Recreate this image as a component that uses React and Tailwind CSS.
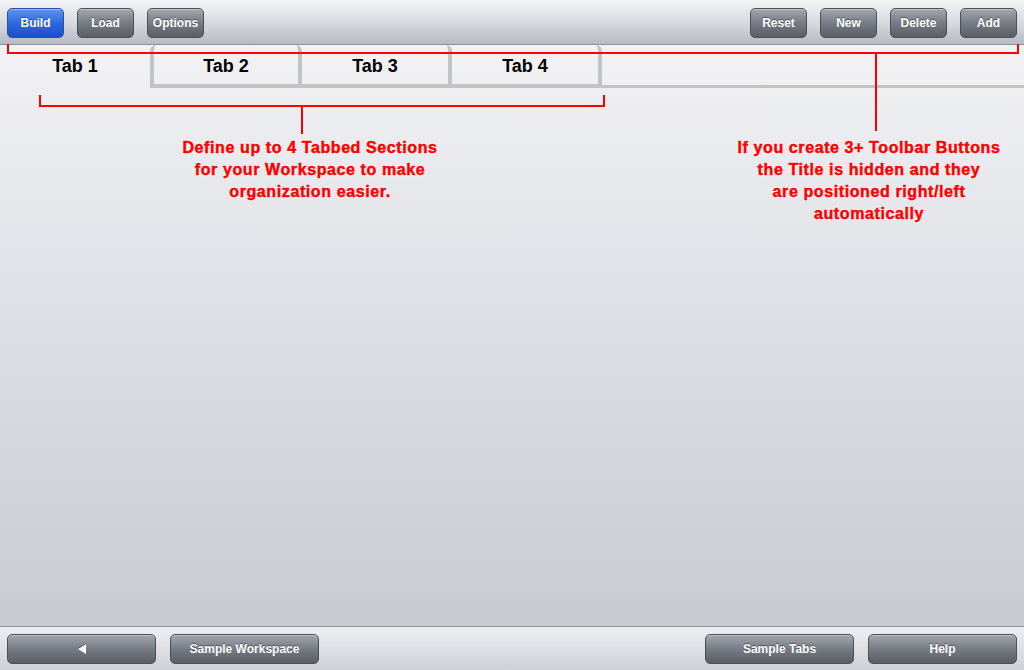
const FONT = { fontFamily: '"Liberation Sans", Arial, sans-serif' };

function ToolButton({ label, primary }) {
  return (
    <button
      type="button"
      className={
        primary
          ? 'h-[30px] w-[57px] rounded-[5px] border border-[#2a4fa8] bg-gradient-to-b from-[#5e93f0] via-[#2f68e0] to-[#1d4fc9] text-[12px] font-bold text-white shadow-[inset_0_1px_0_rgba(255,255,255,0.35)] [text-shadow:0_-1px_0_rgba(0,0,0,0.35)]'
          : 'h-[30px] w-[57px] rounded-[5px] border border-[#4b5058] bg-gradient-to-b from-[#a3a7ae] via-[#777b83] to-[#5a5e66] text-[12px] font-bold text-white shadow-[inset_0_1px_0_rgba(255,255,255,0.3)] [text-shadow:0_-1px_0_rgba(0,0,0,0.4)]'
      }
    >
      {label}
    </button>
  );
}

function BarButton({ children }) {
  return (
    <button
      type="button"
      className="flex h-[30px] w-[149px] items-center justify-center rounded-[5px] border border-[#4b5058] bg-gradient-to-b from-[#a3a7ae] via-[#777b83] to-[#5a5e66] text-[12px] font-bold text-white shadow-[inset_0_1px_0_rgba(255,255,255,0.3)] [text-shadow:0_-1px_0_rgba(0,0,0,0.4)]"
    >
      {children}
    </button>
  );
}

function Note({ children, className }) {
  return (
    <div
      className={`absolute text-center text-[16px] font-bold leading-[22px] tracking-[0.6px] text-[#ff0000] [-webkit-text-stroke:0.5px_#ff0000] [text-shadow:0_0_2px_#fff,0_0_2px_#fff,0_0_3px_#fff] ${className}`}
    >
      {children}
    </div>
  );
}

export default function App() {
  return (
    <div className="relative flex h-[670px] w-[1024px] flex-col overflow-hidden bg-gradient-to-b from-[#f5f5f7] to-[#c6c8d1]" style={FONT}>
      <div className="flex h-[45px] shrink-0 items-center justify-between border-b border-[#8d929c] bg-gradient-to-b from-[#f3f4f6] via-[#d9dbe0] to-[#b6bac4] px-[7px] pt-[1px]">
        <div className="flex gap-[13px]">
          <ToolButton label="Build" primary />
          <ToolButton label="Load" />
          <ToolButton label="Options" />
        </div>
        <div className="flex gap-[13px]">
          <ToolButton label="Reset" />
          <ToolButton label="New" />
          <ToolButton label="Delete" />
          <ToolButton label="Add" />
        </div>
      </div>

      <div className="flex h-[43px] shrink-0 text-[18px] font-bold text-black">
        <div className="flex w-[150px] items-center justify-center">Tab 1</div>
        <div className="flex w-[152px] items-center justify-center rounded-t-[6px] border-x-[4px] border-b-[4px] border-[#c2c3c6] pt-[4px]">Tab 2</div>
        <div className="flex w-[150px] items-center justify-center rounded-tr-[6px] border-r-[4px] border-b-[4px] border-[#c2c3c6] pt-[4px]">Tab 3</div>
        <div className="flex w-[150px] items-center justify-center rounded-tr-[6px] border-r-[4px] border-b-[4px] border-[#c2c3c6] pt-[4px]">Tab 4</div>
        <div className="flex-1 border-b-[3px] border-[#c2c3c6]" />
      </div>

      <div className="flex-1" />

      <div className="flex h-[44px] shrink-0 items-center justify-between border-t border-[#8d929c] bg-gradient-to-b from-[#eeeff2] to-[#cdd0d7] px-[7px] pt-[1px]">
        <div className="flex gap-[14px]">
          <BarButton>
            <svg width="10" height="12" viewBox="0 0 10 12" className="drop-shadow-[0_-1px_0_rgba(0,0,0,0.4)]">
              <path d="M9 1 L1 6 L9 11 Z" fill="#fff" />
            </svg>
          </BarButton>
          <BarButton>Sample Workspace</BarButton>
        </div>
        <div className="flex gap-[14px]">
          <BarButton>Sample Tabs</BarButton>
          <BarButton>Help</BarButton>
        </div>
      </div>

      {/* annotation overlay */}
      <div className="pointer-events-none absolute left-[7px] top-[44px] h-[10px] w-[1012px] border-x-2 border-b-2 border-[#ff0000]" />
      <div className="pointer-events-none absolute left-[875px] top-[54px] h-[77px] w-[2px] bg-[#ff0000]" />
      <div className="pointer-events-none absolute left-[39px] top-[95px] h-[12px] w-[566px] border-x-2 border-b-2 border-[#ff0000]" />
      <div className="pointer-events-none absolute left-[301px] top-[107px] h-[27px] w-[2px] bg-[#ff0000]" />

      <Note className="left-[160px] top-[137px] w-[300px]">
        Define up to 4 Tabbed Sections
        <br />
        for your Workspace to make
        <br />
        organization easier.
      </Note>
      <Note className="left-[719px] top-[137px] w-[300px]">
        If you create 3+ Toolbar Buttons
        <br />
        the Title is hidden and they
        <br />
        are positioned right/left
        <br />
        automatically
      </Note>
    </div>
  );
}
